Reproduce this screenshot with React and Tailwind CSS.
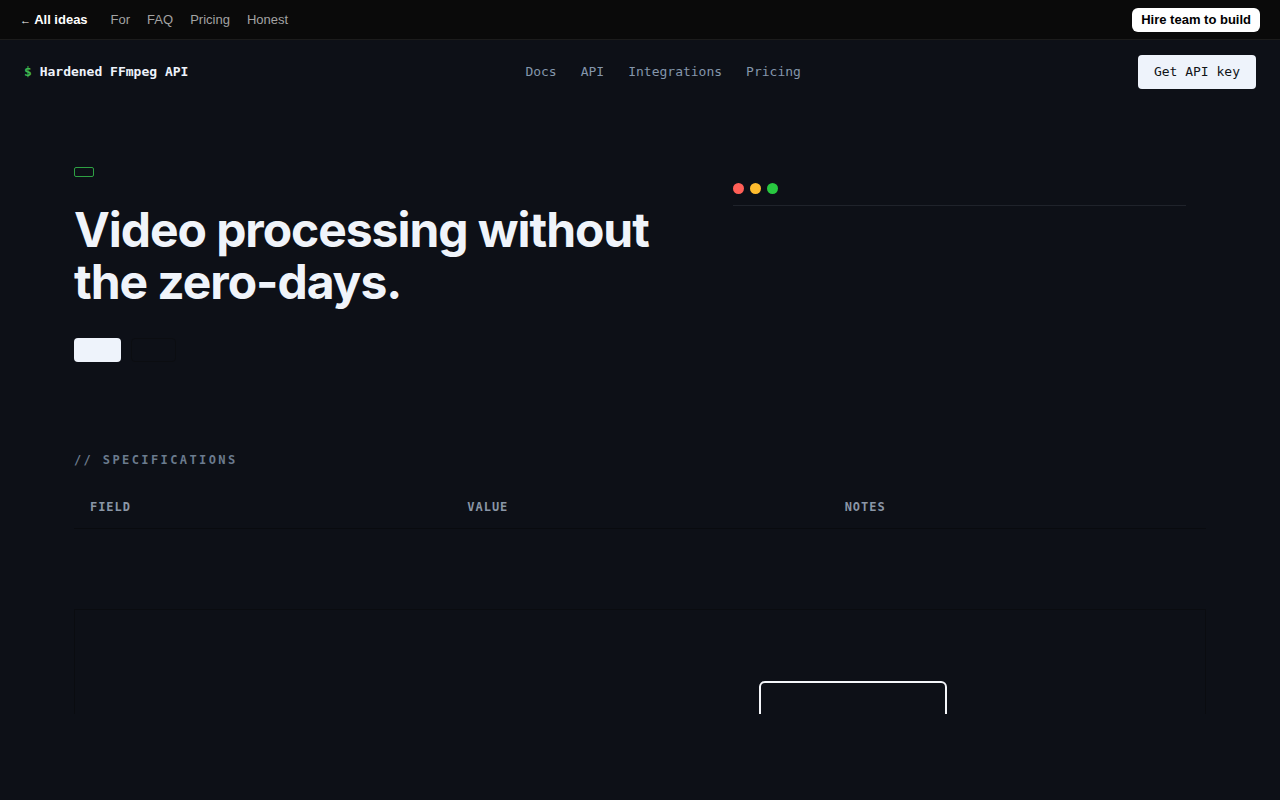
import React from "react";

const mono = "font-['DejaVu_Sans_Mono',monospace]";

function TopBar() {
  return (
    <div className="h-10 bg-[#0a0a0a] border-b border-[#1c1c1c] flex items-center justify-between px-5 font-['Liberation_Sans',Arial,sans-serif] text-[13px]">
      <div className="flex items-center gap-[17px]">
        <a className="text-white font-bold mr-[6px]">
          <span className="font-normal text-[11px]">←</span> All ideas
        </a>
        <a className="text-[#a3a3a3]">For</a>
        <a className="text-[#a3a3a3]">FAQ</a>
        <a className="text-[#a3a3a3]">Pricing</a>
        <a className="text-[#a3a3a3]">Honest</a>
      </div>
      <button className="h-6 px-[9px] rounded-md bg-white text-black font-bold text-[13px]">
        Hire team to build
      </button>
    </div>
  );
}

function Nav() {
  return (
    <nav className={`h-16 flex items-center justify-between px-6 text-[13px] ${mono}`}>
      <div className="font-bold text-[#eef3fb]">
        <span className="text-[#3fb950]">$</span> Hardened FFmpeg API
      </div>
      <div className="flex items-center gap-6 text-[#8496ab]">
        <a>Docs</a>
        <a>API</a>
        <a>Integrations</a>
        <a>Pricing</a>
      </div>
      <button className="h-[34px] px-4 rounded-[4px] bg-[#eef3fb] text-[#111418]">
        Get API key
      </button>
    </nav>
  );
}

function Hero() {
  return (
    <section className="flex items-start pt-[63px]">
      <div className="flex-1">
        <div className="w-5 h-[10px] border border-[#2ea043] rounded-[2px] mb-[27px]"></div>
        <h1 className="font-['Inter',sans-serif] font-bold text-[48px] leading-[52px] tracking-[-0.022em] text-[#f0f4fa]">
          Video processing without
          <br />
          the zero-days.
        </h1>
        <div className="flex items-center gap-[10px] mt-[30px]">
          <button className="w-[47px] h-6 rounded-[4px] bg-[#eef3fb]"></button>
          <button className="w-[45px] h-6 rounded-[4px] border border-[#0b0d11]"></button>
        </div>
      </div>
      <div className="w-[497px] pl-6 pr-5 pt-4">
        <div className="flex items-center gap-[6px] pb-[11px] border-b border-[#1f232b]">
          <span className="w-[11px] h-[11px] rounded-full bg-[#ff5f57]"></span>
          <span className="w-[11px] h-[11px] rounded-full bg-[#febc2e]"></span>
          <span className="w-[11px] h-[11px] rounded-full bg-[#28c840]"></span>
        </div>
      </div>
    </section>
  );
}

function Specs() {
  return (
    <section className={`mt-[90px] ${mono}`}>
      <div className="text-[12px] leading-4 tracking-[0.2em] text-[#6b7b8e] font-bold">
        // SPECIFICATIONS
      </div>
      <div className="mt-[18px] h-[228px] overflow-hidden">
        <div className="grid grid-cols-3 border-b border-[#090b0f] text-[12px] leading-4 font-bold tracking-[0.08em] text-[#8a96a6]">
          <div className="px-4 py-[13px]">FIELD</div>
          <div className="px-4 py-[13px]">VALUE</div>
          <div className="px-4 py-[13px]">NOTES</div>
        </div>
        <div className="h-[80px]"></div>
        <div className="border border-[#0a0c10] h-[160px] pt-[71px]">
          <div className="ml-[684px] w-[188px] h-[60px] border-2 border-[#f4f6fa] rounded-md"></div>
        </div>
      </div>
    </section>
  );
}

export default function App() {
  return (
    <div className="min-h-screen bg-[#0d1017]">
      <TopBar />
      <Nav />
      <main className="max-w-[1132px] mx-auto">
        <Hero />
        <Specs />
      </main>
    </div>
  );
}
